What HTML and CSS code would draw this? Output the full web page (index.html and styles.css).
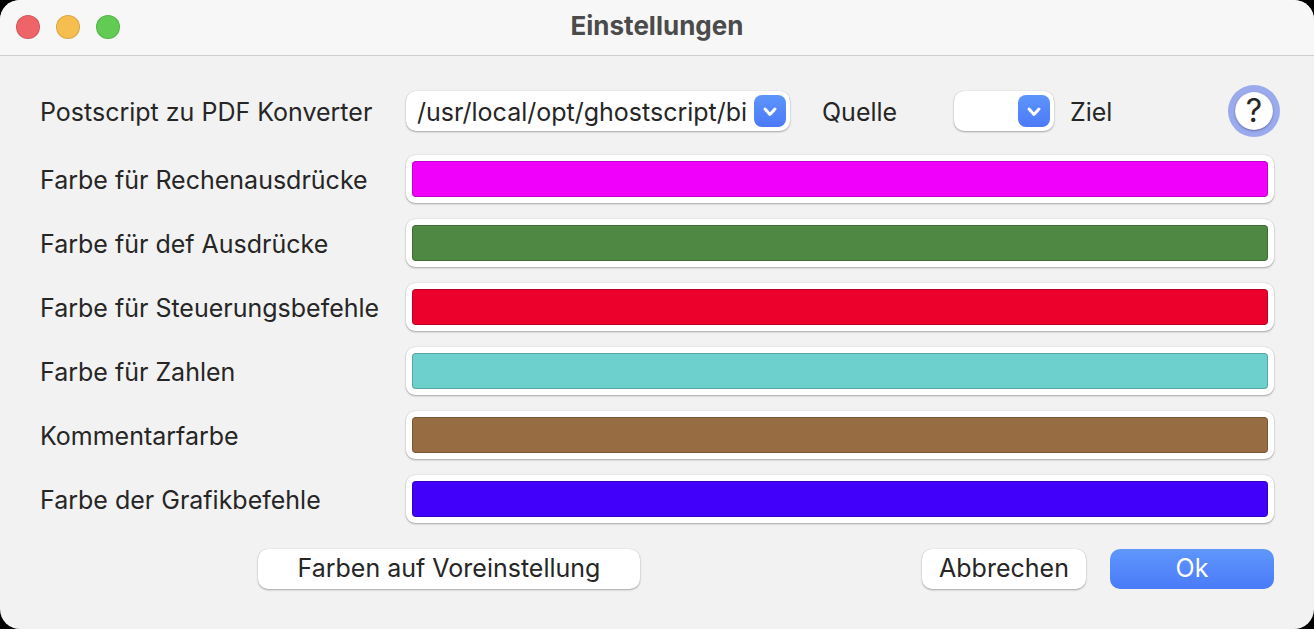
FILE: index.html
```html
<!DOCTYPE html>
<html lang="de">
<head>
<meta charset="utf-8">
<title>Einstellungen</title>
<link rel="stylesheet" href="styles.css">
</head>
<body>
<main class="window">
  <header class="titlebar">
    <div class="lights">
      <button class="light light-close" type="button" aria-label="Schließen"></button>
      <button class="light light-min" type="button" aria-label="Minimieren"></button>
      <button class="light light-zoom" type="button" aria-label="Zoomen"></button>
    </div>
    <h1 class="title">Einstellungen</h1>
  </header>
  <form class="content">
    <div class="row">
      <label class="label" for="source">Postscript zu PDF Konverter</label>
      <div class="converter">
        <div class="popup popup-source">
          <select id="source" class="select"><option>/usr/local/opt/ghostscript/bi</option></select>
          <span class="arrow"><svg viewBox="0 0 32 32" width="32" height="32"><path d="M11 14l5 5.500 5-5.500"/></svg></span>
        </div>
        <label class="source-label" for="source">Quelle</label>
        <div class="popup popup-target">
          <select id="target" class="select"><option></option></select>
          <span class="arrow"><svg viewBox="0 0 32 32" width="32" height="32"><path d="M11 14l5 5.500 5-5.500"/></svg></span>
        </div>
        <label class="target-label" for="target">Ziel</label>
        <button class="help" type="button">?</button>
      </div>
    </div>
    <div class="colors">
      <div class="row"><label class="label" for="c1">Farbe für Rechenausdrücke</label><input class="well" id="c1" type="color" value="#f000fb"></div>
      <div class="row"><label class="label" for="c2">Farbe für def Ausdrücke</label><input class="well" id="c2" type="color" value="#4f8843"></div>
      <div class="row"><label class="label" for="c3">Farbe für Steuerungsbefehle</label><input class="well" id="c3" type="color" value="#ec002c"></div>
      <div class="row"><label class="label" for="c4">Farbe für Zahlen</label><input class="well" id="c4" type="color" value="#6dd0cc"></div>
      <div class="row"><label class="label" for="c5">Kommentarfarbe</label><input class="well" id="c5" type="color" value="#986c43"></div>
      <div class="row"><label class="label" for="c6">Farbe der Grafikbefehle</label><input class="well" id="c6" type="color" value="#4100fa"></div>
    </div>
    <div class="actions">
      <button class="button button-reset" type="button">Farben auf Voreinstellung</button>
      <button class="button" type="button">Abbrechen</button>
      <button class="button button-primary" type="submit">Ok</button>
    </div>
  </form>
</main>
</body>
</html>
```
FILE: styles.css
```css
* { box-sizing: border-box; }

body {
  margin: 0;
  background: #000;
  color: #262626;
  font: 25px/32px Inter, "Liberation Sans", sans-serif;
}

.window {
  display: flex;
  flex-direction: column;
  min-height: 100vh;
  overflow: hidden;
  border-radius: 20px;
  background: #f2f2f2;
}

.titlebar {
  display: grid;
  grid-template-columns: 1fr auto 1fr;
  align-items: center;
  height: 56px;
  padding: 0 16px 2px;
  border-bottom: 1px solid #cfcfcf;
  background: #f7f7f7;
}

.lights { display: flex; gap: 16px; }

.light {
  width: 24px;
  height: 24px;
  padding: 0;
  border: 1px solid rgba(0, 0, 0, 0.12);
  border-radius: 50%;
}

.light-close { background: #ee6468; }
.light-min { background: #f5be4f; }
.light-zoom { background: #61cb53; }

.title {
  margin: 0;
  padding-bottom: 2px;
  color: #4b4b4b;
  font-size: 26px;
  font-weight: 700;
  line-height: 32px;
}

.content { padding: 35px 40px 40px; }

.row {
  display: grid;
  grid-template-columns: 366px 1fr;
  align-items: center;
}

.label,
.source-label,
.target-label {
  padding-top: 2px;
  white-space: nowrap;
}

.converter { display: flex; align-items: center; }

.popup { position: relative; height: 40px; }
.popup-source { flex: 0 0 384px; }
.popup-target { flex: 0 0 100px; }

.select {
  width: 100%;
  height: 40px;
  padding: 2px 38px 0 11px;
  border: 0;
  border-radius: 10px;
  appearance: none;
  background: #fff;
  box-shadow: 0 1px 2px rgba(0, 0, 0, 0.3), 0 0 1px rgba(0, 0, 0, 0.2);
  color: inherit;
  font: inherit;
  text-overflow: clip;
}

.arrow {
  position: absolute;
  top: 4px;
  right: 4px;
  width: 32px;
  height: 32px;
  border-radius: 8px;
  background: linear-gradient(#5c95fb, #4c79f8);
  pointer-events: none;
}

.arrow svg {
  display: block;
  fill: none;
  stroke: #fff;
  stroke-width: 3;
  stroke-linecap: round;
  stroke-linejoin: round;
}

.source-label { width: 132px; margin-left: 32px; }
.target-label { margin-left: 16px; }

.help {
  width: 38px;
  height: 38px;
  margin-right: 1px;
  margin-left: auto;
  padding: 0;
  border: 0;
  border-radius: 50%;
  background: #fff;
  box-shadow: inset 0 0 1px rgba(0, 0, 0, 0.2), 0 1px 2px rgba(40, 50, 120, 0.5), 0 0 0 7px #9baaed;
  color: #262626;
  font: 400 32px/38px Inter, "Liberation Sans", sans-serif;
}

.colors {
  display: grid;
  gap: 16px;
  margin-top: 24px;
}

.well {
  width: 100%;
  height: 48px;
  padding: 6px;
  border: 0;
  border-radius: 9px;
  appearance: none;
  background: #fff;
  box-shadow: 0 1px 2px rgba(0, 0, 0, 0.3), 0 0 1px rgba(0, 0, 0, 0.2);
}

.well::-webkit-color-swatch-wrapper { padding: 0; }

.well::-webkit-color-swatch {
  border: 1px solid rgba(0, 0, 0, 0.2);
  border-radius: 4px;
}

.actions {
  display: flex;
  gap: 24px;
  margin-top: 26px;
}

.button {
  width: 164px;
  height: 40px;
  padding: 0 0 2px;
  border: 0;
  border-radius: 10px;
  background: #fff;
  box-shadow: 0 1px 2px rgba(0, 0, 0, 0.3), 0 0 1px rgba(0, 0, 0, 0.2);
  color: inherit;
  font: inherit;
}

.button-reset {
  width: 382px;
  margin-left: 218px;
  margin-right: auto;
}

.button-primary {
  background: linear-gradient(#5f97fc, #4a7af8);
  box-shadow: none;
  color: #fff;
}
```
